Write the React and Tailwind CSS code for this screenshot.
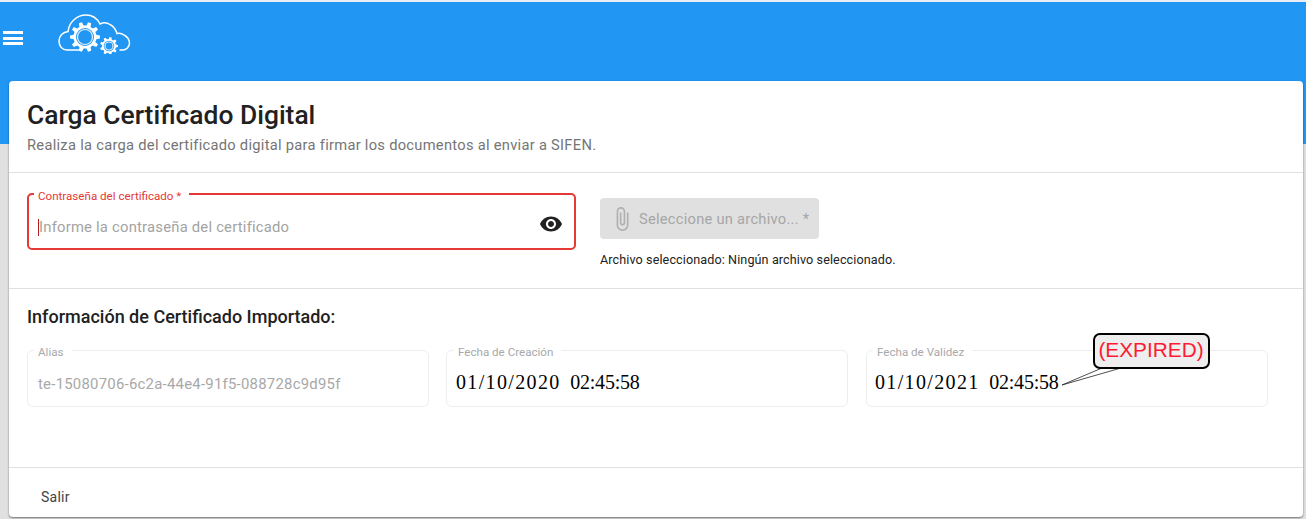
import { MdVisibility, MdAttachFile } from "react-icons/md";

function gearPath(cx, cy, outer, inner, teeth) {
  const pts = [];
  const step = (Math.PI * 2) / teeth;
  for (let i = 0; i < teeth; i++) {
    const a = i * step;
    const list = [
      [a - step * 0.3, inner],
      [a - step * 0.17, outer],
      [a + step * 0.17, outer],
      [a + step * 0.3, inner],
    ];
    list.forEach(([t, r]) => {
      pts.push(`${(cx + Math.cos(t) * r).toFixed(2)} ${(cy + Math.sin(t) * r).toFixed(2)}`);
    });
  }
  return `M${pts.join("L")}Z`;
}

function Logo() {
  return (
    <svg width="73" height="40" viewBox="0 0 73 40" fill="none" className="block">
      <path
        d="M22 36H9C4 36 1 32 1 27C1 22 5 18 10 17.500C11 8 19 1 28 1C34 1 39 4 42 10C45 8.500 49 8.500 52 10.500C55.500 12.500 58 16 59 19.500C61 19 64 19.500 66 21C69.500 23 71.500 26 71.500 29C71.500 33 68 36 65 36H62"
        stroke="white"
        strokeWidth="1.500"
        strokeLinecap="round"
      />
      <path d={gearPath(27, 23, 15, 11.500, 10)} fill="white" />
      <circle cx="27" cy="23" r="9" fill="#2196f3" />
      <circle cx="27" cy="23" r="7.500" fill="none" stroke="#e3f1fd" strokeWidth="1.200" />
      <path d={gearPath(51, 32, 9, 7, 9)} fill="white" />
      <circle cx="51" cy="32" r="5.300" fill="#2196f3" />
      <circle cx="51" cy="32" r="4" fill="none" stroke="#e3f1fd" strokeWidth="1.200" />
    </svg>
  );
}

function ReadonlyField({ label, className = "", children }) {
  return (
    <fieldset className={`w-[402px] h-[66px] border border-[#eeeeee] rounded-[6px] px-[8px] -mt-[6px] ${className}`}>
      <legend className="-ml-[2px] pl-[4px] pr-[8px] pt-[5px] text-[11.600px] leading-[13px] text-[#a8a8a8]">{label}</legend>
      {children}
    </fieldset>
  );
}

function DateValue({ date, time }) {
  return (
    <p className="mt-[11px] flex gap-[9.500px] whitespace-pre text-[20px] leading-[24px] text-black font-['Liberation_Serif',serif]">
      <span className="tracking-[1.350px]">{date}</span>
      <span className="-tracking-[0.200px]">{time}</span>
    </p>
  );
}

export default function App() {
  return (
    <div className="h-[519px] overflow-hidden bg-[#e0e0e0] font-['Roboto',sans-serif]">
      <header className="h-[144px] border-t-2 border-[#e8eef3] bg-[#2196f3] flex items-start">
        <button className="mt-[29px] ml-[3px] flex flex-col gap-[2.500px]">
          <span className="block w-[20px] h-[3px] bg-white" />
          <span className="block w-[20px] h-[3px] bg-white" />
          <span className="block w-[20px] h-[3px] bg-white" />
        </button>
        <div className="ml-[35px] mt-[12px]">
          <Logo />
        </div>
      </header>

      <main className="relative -mt-[63px] ml-[9px] mr-[3px] h-[436px] bg-white rounded-[4px] shadow-[0_1px_2px_rgba(0,0,0,0.5)] flex flex-col">
        <section className="h-[92px] border-b border-[#e0e0e0] pt-[18px] px-[18px]">
          <h1 className="text-[26.400px] leading-[32px] font-medium text-[#212121]">Carga Certificado Digital</h1>
          <p className="mt-[4px] text-[14.700px] leading-[20px] tracking-[0.28px] text-[#757575]">
            Realiza la carga del certificado digital para firmar los documentos al enviar a SIFEN.
          </p>
        </section>

        <section className="h-[116px] border-b border-[#e0e0e0] pl-[18px] flex items-start">
          <fieldset className="mt-[11px] w-[549px] h-[66px] border-2 border-[#e53935] rounded-[5px] pl-[8px] pr-[11px] flex items-center">
            <legend className="-ml-[3px] pl-[4px] pr-[8px] pt-[5px] pb-[1px] text-[11.600px] leading-[14px] text-[#e53935]">Contraseña del certificado *</legend>
            <div className="flex-1 flex items-center mt-[2px] ml-[1px]">
              <span className="w-px h-[17px] bg-[#b71c1c]" />
              <span className="text-[14.800px] leading-[20px] tracking-[0.22px] text-[#a3a3a3]">Informe la contraseña del certificado</span>
            </div>
            <MdVisibility size={24} className="text-[#212121] -mt-[4px]" />
          </fieldset>

          <div className="ml-[24px] mt-[25px]">
            <div className="w-[219px] h-[41px] rounded-[4px] bg-[#e0e0e0] flex items-center pl-[9px] text-[#a6a6a6]">
              <MdAttachFile size={26} className="text-[#b0b0b0]" />
              <span className="ml-[4px] mt-[1px] text-[14.700px] tracking-[0.25px] whitespace-nowrap">Seleccione un archivo... *</span>
            </div>
            <p className="mt-[13px] text-[12.600px] leading-[16px] text-[#212121] tracking-[0.1px] whitespace-nowrap">
              Archivo seleccionado: Ningún archivo seleccionado.
            </p>
          </div>
        </section>

        <section className="relative flex-1 border-b border-[#e0e0e0] px-[18px] pt-[16px]">
          <h2 className="text-[18px] leading-[24px] font-medium text-[#212121]">Información de Certificado Importado:</h2>
          <div className="mt-[18px] flex gap-[17px]">
            <ReadonlyField label="Alias">
              <p className="mt-[15px] ml-[2px] text-[14.900px] leading-[20px] tracking-[0.25px] text-[#a8a8a8]">
                te-15080706-6c2a-44e4-91f5-088728c9d95f
              </p>
            </ReadonlyField>
            <ReadonlyField label="Fecha de Creación" className="pl-[9px]">
              <DateValue date="01/10/2020" time="02:45:58" />
            </ReadonlyField>
            <ReadonlyField label="Fecha de Validez" className="ml-[1px]">
              <DateValue date="01/10/2021" time="02:45:58" />
            </ReadonlyField>
          </div>

          <svg width="70" height="30" viewBox="0 0 70 30" fill="none" className="absolute left-[1050px] top-[74px]">
            <path d="M3 22L43 5L62 5L3 22" fill="white" stroke="#222222" strokeWidth="0.800" />
          </svg>
          <div className="absolute left-[1084px] top-[44px] w-[117px] h-[36px] rounded-[7px] border-2 border-black bg-[#eeeeee] flex items-center justify-center pb-[2px] pr-[1px] text-[20.800px] leading-none text-[#ff1a33] font-['Liberation_Sans',sans-serif]">
            (EXPIRED)
          </div>
        </section>

        <footer className="h-[49px] flex items-center pl-[32px] pt-[10px]">
          <span className="text-[14px] tracking-[0.25px] text-[#424242]">Salir</span>
        </footer>
      </main>
    </div>
  );
}
